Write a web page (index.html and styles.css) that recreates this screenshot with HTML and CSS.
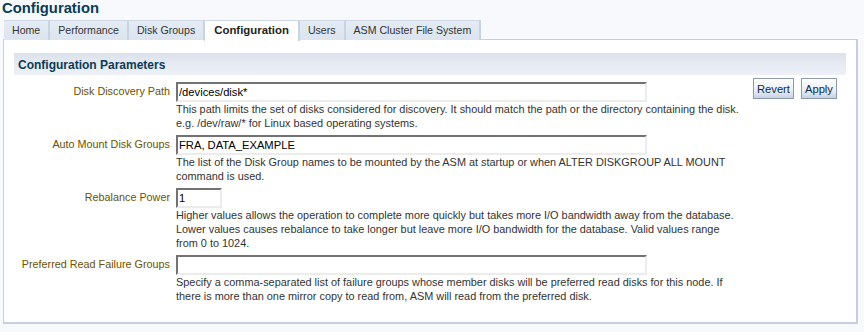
FILE: index.html
```html
<!DOCTYPE html>
<html lang="en">
<head>
  <meta charset="utf-8">
  <title>Configuration</title>
<link rel="stylesheet" href="styles.css">
</head>
<body>
  <h1 class="page-title">Configuration</h1>

  <ul class="tabs">
    <li class="tab">Home</li>
    <li class="tab">Performance</li>
    <li class="tab">Disk Groups</li>
    <li class="tab tab-active">Configuration</li>
    <li class="tab">Users</li>
    <li class="tab">ASM Cluster File System</li>
  </ul>

  <div class="panel">
    <h2 class="section-title">Configuration Parameters</h2>

    <div class="form">
      <div class="fields">
        <div class="row">
          <label class="label">Disk Discovery Path</label>
          <div class="field">
            <input class="text-input" type="text" value="/devices/disk*">
            <p class="hint">This path limits the set of disks considered for discovery. It should match the path or the directory containing the disk. e.g. /dev/raw/* for Linux based operating systems.</p>
          </div>
        </div>
        <div class="row">
          <label class="label">Auto Mount Disk Groups</label>
          <div class="field">
            <input class="text-input" type="text" value="FRA, DATA_EXAMPLE">
            <p class="hint">The list of the Disk Group names to be mounted by the ASM at startup or when ALTER DISKGROUP ALL MOUNT command is used.</p>
          </div>
        </div>
        <div class="row">
          <label class="label">Rebalance Power</label>
          <div class="field">
            <input class="text-input text-input-short" type="text" value="1">
            <p class="hint">Higher values allows the operation to complete more quickly but takes more I/O bandwidth away from the database. Lower values causes rebalance to take longer but leave more I/O bandwidth for the database. Valid values range from 0 to 1024.</p>
          </div>
        </div>
        <div class="row">
          <label class="label">Preferred Read Failure Groups</label>
          <div class="field">
            <input class="text-input" type="text" value="">
            <p class="hint">Specify a comma-separated list of failure groups whose member disks will be preferred read disks for this node. If there is more than one mirror copy to read from, ASM will read from the preferred disk.</p>
          </div>
        </div>
      </div>

      <div class="actions">
        <button class="btn" type="button">Revert</button>
        <button class="btn" type="button">Apply</button>
      </div>
    </div>
  </div>
</body>
</html>
```

FILE: styles.css
```css
body {
  margin: 0;
  padding: 0;
  background: #f7f9fc;
  font-family: "Liberation Sans", Arial, sans-serif;
  font-size: 11px;
  color: #333;
}

.page-title {
  margin: 0;
  padding: 0 0 0 2px;
  height: 20px;
  line-height: 17px;
  font-size: 14.8px;
  font-weight: bold;
  color: #0b3b57;
}

/* Tabs */

.tabs {
  display: flex;
  margin: 0 0 0 4px;
  padding: 0;
  list-style: none;
  height: 20px;
}

.tab {
  padding: 0 8px;
  line-height: 19px;
  font-size: 10.6px;
  color: #333;
  background: linear-gradient(#e4ebf4, #dbe4ef);
  border-top: 1px solid #cfd9e6;
  border-right: 2px solid #c9d4e2;
}

.tab-active {
  position: relative;
  z-index: 1;
  height: 20px;
  padding: 0 9px;
  background: #fff;
  font-size: 11.4px;
  font-weight: bold;
  color: #222;
  border-left: 1px solid #c9d4e2;
  border-right: 2px solid #c9d4e2;
  margin-left: -1px;
}

/* Panel */

.panel {
  margin: -1px 6px 0 3px;
  padding: 13px 10px 0 10px;
  height: 269px;
  background: #fff;
  border: 1px solid #c4cfe1;
  border-width: 1px 2px 2px 1px;
}

.section-title {
  margin: 0;
  padding: 0 0 0 4px;
  height: 22px;
  line-height: 24px;
  font-size: 12px;
  font-weight: bold;
  color: #0b3b57;
  background: linear-gradient(#dce2ed, #eef1f7);
}

.form {
  display: flex;
  margin-top: 3px;
}

.fields {
  width: 732px;
}

.row {
  display: flex;
  margin-top: 4px;
}

.row + .row { margin-top: 5px; }

.label {
  width: 156px;
  padding-top: 3px;
  text-align: right;
  font-size: 10.8px;
  color: #6b5100;
}

.field {
  margin-left: 6px;
  width: 565px;
}

.text-input {
  box-sizing: border-box;
  display: block;
  width: 471px;
  height: 20px;
  margin: 0;
  padding: 0 1px;
  font-family: "Liberation Sans", Arial, sans-serif;
  font-size: 11.2px;
  color: #000;
  border-style: solid;
  border-width: 2px;
  border-color: #727272 #ececec #ececec #727272;
  outline: none;
}

.text-input-short { width: 46px; }

.hint {
  margin: 0;
  line-height: 14px;
  font-size: 10.9px;
  color: #333;
}

/* Buttons */

.actions {
  display: flex;
  gap: 7px;
  margin-left: 7px;
  align-self: flex-start;
}

.btn {
  height: 21px;
  padding: 0 3px;
  font-family: "Liberation Sans", Arial, sans-serif;
  font-size: 11.2px;
  color: #10294a;
  background: linear-gradient(#ffffff, #e9eef5 60%, #c7d2e1);
  border: 1px solid #8d9bb0;
  border-radius: 0;
}
```
